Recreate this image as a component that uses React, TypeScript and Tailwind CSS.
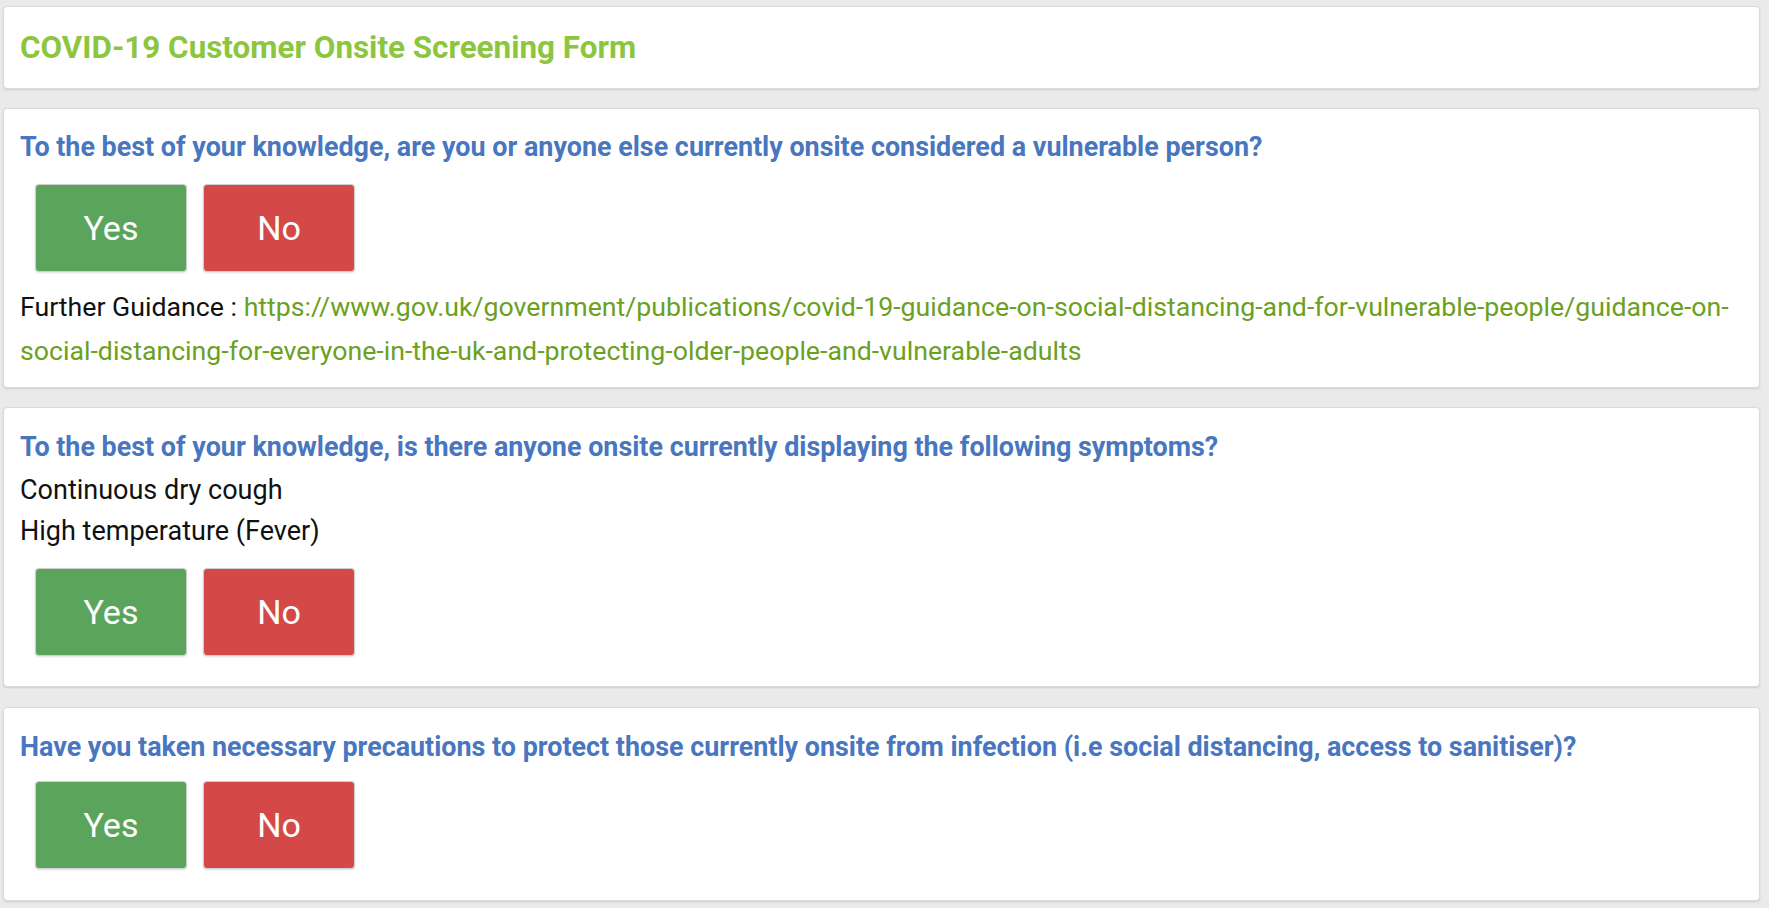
import React from 'react';

const YesNo: React.FC<{ className?: string }> = ({ className = '' }) => (
  <div className={`flex gap-4 pl-[15px] ${className}`}>
    <button className="w-[152px] h-[88px] rounded bg-[#5ba45c] border border-[#cfcfcf] text-white text-[34px] leading-none shadow-sm">
      Yes
    </button>
    <button className="w-[152px] h-[88px] rounded bg-[#d44948] border border-[#cfcfcf] text-white text-[34px] leading-none shadow-sm">
      No
    </button>
  </div>
);

const Card: React.FC<{ className?: string; children: React.ReactNode }> = ({ className = '', children }) => (
  <div className={`bg-white border border-[#dadada] rounded shadow-[0_1px_2px_rgba(0,0,0,0.12)] px-4 ${className}`}>
    {children}
  </div>
);

const Question: React.FC<{ children: React.ReactNode }> = ({ children }) => (
  <h2 className="text-[26.9px] leading-[32px] font-bold text-[#4876bf]">{children}</h2>
);

const App: React.FC = () => {
  return (
    <div
      className="min-h-screen bg-[#eaeaea] pl-[3px] pr-[9px] pt-[6px] pb-2"
      style={{ fontFamily: 'Roboto, "Noto Sans", sans-serif' }}
    >
      <Card className="pt-[23px] pb-[22px]">
        <h1 className="text-[31.4px] leading-[36px] font-bold text-[#8cc63f]">
          COVID-19 Customer Onsite Screening Form
        </h1>
      </Card>

      <Card className="mt-[19px] pt-[22px] pb-[14px]">
        <Question>
          To the best of your knowledge, are you or anyone else currently onsite considered a vulnerable person?
        </Question>
        <YesNo className="mt-[21px]" />
        <p className="mt-[13px] text-[26.7px] leading-[44px] text-[#111]">
          Further Guidance :{' '}
          <a href="#" className="text-[#6ba022] break-words">
            https://www.gov.uk/government/publications/covid-19-guidance-on-social-distancing-and-for-vulnerable-people/guidance-on-social-distancing-for-everyone-in-the-uk-and-protecting-older-people-and-vulnerable-adults
          </a>
        </p>
      </Card>

      <Card className="mt-[19px] pt-[23px] pb-[30px]">
        <Question>
          To the best of your knowledge, is there anyone onsite currently displaying the following symptoms?
        </Question>
        <div className="mt-[7px] text-[27px] leading-[41px] text-[#111]">
          <p>Continuous dry cough</p>
          <p>High temperature (Fever)</p>
        </div>
        <YesNo className="mt-[16px]" />
      </Card>

      <Card className="mt-[20px] pt-[23px] pb-[31px]">
        <Question>
          Have you taken necessary precautions to protect those currently onsite from infection (i.e social distancing, access to sanitiser)?
        </Question>
        <YesNo className="mt-[18px]" />
      </Card>
    </div>
  );
};

export default App;
